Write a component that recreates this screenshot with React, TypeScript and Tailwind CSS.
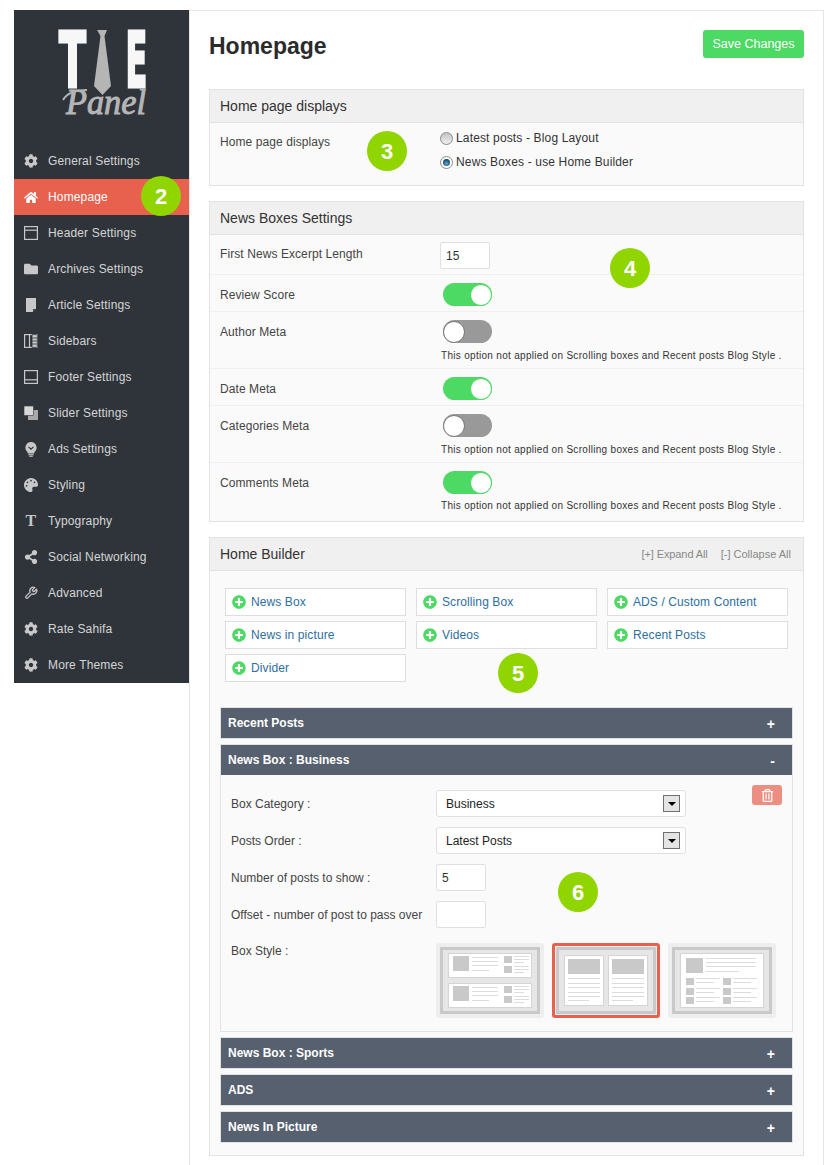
import React from "react";
import { FaCog, FaHome, FaFolder, FaPalette, FaShareAlt, FaPlusCircle, FaRegTrashAlt } from "react-icons/fa";
import { LuWrench } from "react-icons/lu";

const IconHeader = () => (
  <svg width="14" height="14" viewBox="0 0 14 14" fill="none" stroke="currentColor" strokeWidth="1.2"><rect x=".6" y=".6" width="12.8" height="12.8" /><path d="M.6 4.2h12.8" /></svg>
);
const IconFooter = () => (
  <svg width="14" height="14" viewBox="0 0 14 14" fill="none" stroke="currentColor" strokeWidth="1.2"><rect x=".6" y=".6" width="12.8" height="12.8" /><path d="M.6 9.8h12.8" /></svg>
);
const IconArticle = () => (
  <svg width="14" height="14" viewBox="0 0 14 14" fill="currentColor"><path d="M2 0h10v10.5L8.5 14H2z" /><path d="M9 11h2.2L9 13.2z" fill="#2f343b" /></svg>
);
const IconSidebars = () => (
  <svg width="14" height="14" viewBox="0 0 14 14" fill="none" stroke="currentColor" strokeWidth="1.2"><rect x=".6" y=".6" width="12.8" height="12.8" /><path d="M5.5 .6v12.8" /><path d="M8 .6h5.4v12.8H8zM8 4h5.4M8 7h5.4M8 10h5.4" fill="currentColor" strokeWidth=".8" stroke="#2f343b" /></svg>
);
const IconSlider = () => (
  <svg width="14" height="14" viewBox="0 0 14 14"><rect x="4" y="4" width="10" height="10" fill="#a9a9a9" /><rect x="0" y="0" width="9.5" height="9.5" fill="#d8d8d8" stroke="#2f343b" strokeWidth=".6" /></svg>
);
const IconBulb = () => (
  <svg width="14" height="15" viewBox="0 0 14 15"><path d="M7 0a5.6 5.6 0 0 1 3.4 10v1.5H3.6V10A5.6 5.6 0 0 1 7 0z" fill="currentColor" /><path d="M4.5 4.8 7 7.2l2.5-2.4" fill="none" stroke="#2f343b" strokeWidth="1.1" /><rect x="4.4" y="12.2" width="5.2" height="1.1" fill="currentColor" /><rect x="5.2" y="13.7" width="3.6" height="1.1" fill="currentColor" /></svg>
);

const navItems: [string, React.ReactNode][] = [
  ["General Settings", <FaCog size={14} />],
  ["Homepage", <FaHome size={15} />],
  ["Header Settings", <IconHeader />],
  ["Archives Settings", <FaFolder size={14} />],
  ["Article Settings", <IconArticle />],
  ["Sidebars", <IconSidebars />],
  ["Footer Settings", <IconFooter />],
  ["Slider Settings", <IconSlider />],
  ["Ads Settings", <IconBulb />],
  ["Styling", <FaPalette size={14} />],
  ["Typography", <span className="font-['Liberation_Serif'] font-bold text-[16px] leading-none">T</span>],
  ["Social Networking", <FaShareAlt size={14} />],
  ["Advanced", <LuWrench size={14} strokeWidth={2.2} />],
  ["Rate Sahifa", <FaCog size={14} />],
  ["More Themes", <FaCog size={14} />],
];

const Badge = ({ n, className }: { n: number; className: string }) => (
  <div className={`absolute w-10 h-10 rounded-full bg-[#90d400] text-white font-bold text-[22px] flex items-center justify-center font-['Liberation_Sans',sans-serif] ${className}`}>{n}</div>
);

const Logo = () => (
  <svg width="175" height="115" viewBox="14 10 175 115" className="block">
    <text x="59" y="86.5" fontFamily="'DejaVu Sans',sans-serif" fontWeight="700" fontSize="76" fill="#f7f7f7" stroke="#f7f7f7" strokeWidth="3" textLength="27" lengthAdjust="spacingAndGlyphs">T</text>
    <text x="125.6" y="86.5" fontFamily="'DejaVu Sans',sans-serif" fontWeight="700" fontSize="76" fill="#f7f7f7" stroke="#f7f7f7" strokeWidth="3" textLength="21.8" lengthAdjust="spacingAndGlyphs">E</text>
    <path d="M97 30h10l-2.5 6 6.5 50-8.5 9-8.5-9 6.5-50z" fill="#b5b5b5" />
    <path d="M63 100c4-7 14-10 24-10" fill="none" stroke="#b5b5b5" strokeWidth="2" />
    <text x="66" y="114" fontFamily="'Liberation Serif',serif" fontStyle="italic" fontSize="36" fill="#b5b5b5" stroke="#b5b5b5" strokeWidth="1" textLength="80" lengthAdjust="spacingAndGlyphs">Panel</text>
  </svg>
);

const Sidebar = () => (
  <aside className="w-[175px] h-[673px] shrink-0 bg-[#2f343b] relative">
    <Logo />
    <nav className="mt-[18px]">
      {navItems.map(([label, icon]) => {
        const active = label === "Homepage";
        return (
          <div key={label} className={`h-9 flex items-center pl-[10px] text-[12px] tracking-[0.15px] ${active ? "bg-[#e8614e] text-white" : "text-[#d4d4d4]"}`}>
            <span className={`w-[14px] h-[14px] flex items-center justify-center shrink-0 ${active ? "text-white" : "text-[#c8c8c8]"}`}>{icon}</span>
            <span className="ml-[10px]">{label}</span>
          </div>
        );
      })}
    </nav>
  </aside>
);

const Section = ({ title, right, children }: { title: string; right?: React.ReactNode; children: React.ReactNode }) => (
  <section className="border border-[#e2e2e2] bg-[#fafafa] mb-[15px]">
    <div className="h-[33px] bg-[#f0f0f0] border-b border-[#e2e2e2] flex items-center justify-between pl-[10px] pr-[12px] text-[14px] text-[#333]">
      <span>{title}</span>
      {right}
    </div>
    {children}
  </section>
);

const Radio = ({ checked, label }: { checked?: boolean; label: string }) => (
  <div className="flex items-center h-[24px]">
    <span className={`w-[13px] h-[13px] rounded-full border border-[#8a8a8a] flex items-center justify-center ${checked ? "bg-white" : "bg-gradient-to-b from-[#c4c4c4] to-[#f0f0f0]"}`}>
      {checked && <span className="w-[7px] h-[7px] rounded-full bg-[radial-gradient(circle_at_50%_65%,#58a8dc,#123f5e_75%)]" />}
    </span>
    <span className="ml-[3px] text-[12px] tracking-[0.15px] text-[#333]">{label}</span>
  </div>
);

const Toggle = ({ on }: { on?: boolean }) => (
  <div className={`w-[49px] h-[23px] rounded-full flex items-center ml-[3px] ${on ? "bg-[#4cd964] justify-end" : "bg-[#999999] justify-start"}`}>
    <span className={`w-[22px] h-[22px] rounded-full bg-white border ${on ? "border-[#4cd964]" : "border-[#777]"}`} />
  </div>
);

const Hint = ({ tight }: { tight?: boolean }) => (
  <p className={`${tight ? "mt-[5px]" : "mt-[6px]"} ml-[1px] text-[10px] leading-[14px] text-[#333] tracking-[0.3px] whitespace-nowrap`}>This option not applied on Scrolling boxes and Recent posts Blog Style .</p>
);

const SettingRow = ({ label, h, top, pad = "pt-[8px]", children, last }: { label: string; h: string; top: string; pad?: string; children: React.ReactNode; last?: boolean }) => (
  <div className={`flex pl-[10px] ${h} ${last ? "" : "border-b border-[#f0f0f0]"}`}>
    <div className={`w-[220px] text-[12px] tracking-[0.08px] text-[#444] shrink-0 ${top}`}>{label}</div>
    <div className={pad}>{children}</div>
  </div>
);

const Input = ({ value }: { value?: string }) => (
  <div className="w-[50px] h-[27px] bg-white border border-[#e0e0e0] rounded-[2px] flex items-center pl-[5px] text-[12px] text-[#333]">{value}</div>
);

const Select = ({ value }: { value: string }) => (
  <div className="w-[250px] h-[27px] bg-white border border-[#e0e0e0] rounded-[3px] flex items-center justify-between pl-[9px] pr-[5px] text-[12px] text-[#222]">
    <span>{value}</span>
    <span className="w-[17px] h-[17px] border border-[#707070] bg-[#e4e4e4] flex items-center justify-center">
      <span className="w-0 h-0 border-l-[4px] border-r-[4px] border-t-[4px] border-l-transparent border-r-transparent border-t-black" />
    </span>
  </div>
);

const AddButton = ({ label }: { label: string }) => (
  <div className="h-[28px] border border-[#dedede] bg-white flex items-center pl-[6px] text-[12px] tracking-[0.1px] text-[#2d6f9e]">
    <FaPlusCircle size={14} className="text-[#4cd964] shrink-0" />
    <span className="ml-[5px]">{label}</span>
  </div>
);

const AccHeader = ({ title, sign = "+" }: { title: string; sign?: string }) => (
  <div className="h-[30px] bg-[#56606e] flex items-center justify-between pl-[7px] pr-[17px] text-white font-bold text-[12px]">
    <span className="pb-[1px]">{title}</span>
    <span className="text-[14px] pt-[3px]">{sign}</span>
  </div>
);

const Acc = ({ title }: { title: string }) => (
  <div className="border border-[#e2e2e2] mb-[5px]"><AccHeader title={title} /></div>
);

const Line = ({ x, y, w }: { x: number; y: number; w: number }) => <rect x={x} y={y} width={w} height="1" fill="#dcdcdc" />;
const Sq = ({ x, y, w, h }: { x: number; y: number; w: number; h: number }) => <rect x={x} y={y} width={w} height={h} fill="#c9c9c9" />;

const Frame = ({ children }: { children: React.ReactNode }) => (
  <>
    <rect x="5.5" y="5.5" width="97" height="64" fill="#e6e6e6" stroke="#c9c9c9" strokeWidth="3" />
    {children}
  </>
);

const Wide = ({ y }: { y: number }) => (
  <g>
    <rect x="12.5" y={y + 0.5} width="83" height="24" fill="#fff" stroke="#d5d5d5" />
    <Sq x={17} y={y + 3} w={16} h={15} />
    <Line x={36} y={y + 4} w={26} /><Line x={36} y={y + 8} w={26} /><Line x={36} y={y + 12} w={26} /><Line x={36} y={y + 17} w={17} />
    <Sq x={68} y={y + 3} w={8} h={7} /><Sq x={68} y={y + 13} w={8} h={7} />
    <Line x={78} y={y + 3} w={15} /><Line x={78} y={y + 6} w={15} /><Line x={78} y={y + 9} w={10} />
    <Line x={78} y={y + 13} w={15} /><Line x={78} y={y + 16} w={15} /><Line x={78} y={y + 19} w={10} />
  </g>
);

const Tall = ({ x }: { x: number }) => (
  <g>
    <rect x={x + 0.5} y="12.5" width="39" height="50" fill="#fff" stroke="#d5d5d5" />
    <Sq x={x + 4} y={16} w={32} h={15} />
    <Line x={x + 4} y={35} w={32} /><Line x={x + 4} y={40} w={32} /><Line x={x + 4} y={44} w={32} /><Line x={x + 4} y={49} w={32} /><Line x={x + 4} y={53} w={32} /><Line x={x + 4} y={57} w={21} />
  </g>
);

const Mini = ({ x, y }: { x: number; y: number }) => (
  <g>
    <Sq x={x} y={y} w={8} h={7} />
    <Line x={x + 10} y={y} w={24} /><Line x={x + 10} y={y + 4} w={18} />
  </g>
);

const Thumb = ({ selected, children }: { selected?: boolean; children: React.ReactNode }) => (
  <div className="w-[108px] h-[75px] bg-[#eeeeee] rounded-[3px] relative">
    <svg width="108" height="75" viewBox="0 0 108 75" className="block"><Frame>{children}</Frame></svg>
    {selected && <div className="absolute inset-0 rounded-[3px] border-[3px] border-[#e8614e]" />}
  </div>
);

const BoxForm = () => (
  <div className="relative bg-[#fafafa] pl-[10px] pt-[15px] pb-[13px] text-[12px] text-[#444]">
    <div className="absolute right-[10px] top-[10px] w-[30px] h-[20px] bg-[#ec8f82] rounded-[3px] flex items-center justify-center text-white">
      <FaRegTrashAlt size={13} />
    </div>
    <div className="flex flex-col gap-[10px]">
      <div className="flex"><div className="w-[205px] pt-[5px]">Box Category :</div><Select value="Business" /></div>
      <div className="flex"><div className="w-[205px] pt-[5px]">Posts Order :</div><Select value="Latest Posts" /></div>
      <div className="flex"><div className="w-[205px] pt-[5px]">Number of posts to show :</div><Input value="5" /></div>
      <div className="flex"><div className="w-[205px] pt-[5px]">Offset - number of post to pass over</div><Input /></div>
    </div>
    <div className="flex mt-[15px]">
      <div className="w-[205px] -mt-[1px]">Box Style :</div>
      <div className="flex gap-[8px]">
        <Thumb><Wide y={10} /><Wide y={40} /></Thumb>
        <Thumb selected><Tall x={12} /><Tall x={56} /></Thumb>
        <Thumb>
          <rect x="12.5" y="10.5" width="83" height="54" fill="#fff" stroke="#d5d5d5" />
          <Sq x={18} y={15} w={17} h={15} />
          <Line x={38} y={15} w={50} /><Line x={38} y={19} w={50} /><Line x={38} y={23} w={50} /><Line x={38} y={28} w={33} />
          <Mini x={18} y={35} /><Mini x={18} y={45} /><Mini x={18} y={54} />
          <Mini x={55} y={35} /><Mini x={55} y={45} /><Mini x={55} y={54} />
        </Thumb>
      </div>
    </div>
  </div>
);

export default function App() {
  return (
    <div className="relative w-[833px] h-[1165px] overflow-hidden bg-white flex pt-[10px] pl-[14px] font-['Liberation_Sans',Arial,sans-serif]">
      <Sidebar />
      <main className="w-[635px] h-[1155px] shrink-0 border-l border-r border-t border-[#e5e5e5] px-[19px] pt-[19px]">
        <div className="flex justify-between items-start h-[59px]">
          <h1 className="text-[23px] font-bold text-[#2b2b2b] leading-[32px]">Homepage</h1>
          <div className="w-[101px] h-[28px] bg-[#4cd964] rounded-[3px] text-white text-[12.5px] flex items-center justify-center">Save Changes</div>
        </div>
        <Section title="Home page displays">
          <div className="flex pl-[10px] h-[62px]">
            <div className="w-[220px] text-[12px] tracking-[0.08px] text-[#444] pt-[10px]">Home page displays</div>
            <div className="pt-[3px]">
              <Radio label="Latest posts - Blog Layout" />
              <Radio checked label="News Boxes - use Home Builder" />
            </div>
          </div>
        </Section>
        <Section title="News Boxes Settings">
          <SettingRow label="First News Excerpt Length" h="h-[40px]" top="pt-[10px]" pad="pt-[7px]"><Input value="15" /></SettingRow>
          <SettingRow label="Review Score" h="h-[37px]" top="pt-[11px]"><Toggle on /></SettingRow>
          <SettingRow label="Author Meta" h="h-[57px]" top="pt-[11px]"><Toggle /><Hint /></SettingRow>
          <SettingRow label="Date Meta" h="h-[37px]" top="pt-[11px]"><Toggle on /></SettingRow>
          <SettingRow label="Categories Meta" h="h-[57px]" top="pt-[11px]"><Toggle /><Hint /></SettingRow>
          <SettingRow label="Comments Meta" h="h-[58px]" top="pt-[11px]" last><Toggle on /><Hint tight /></SettingRow>
        </Section>
        <Section
          title="Home Builder"
          right={
            <span className="text-[11px] text-[#888] flex gap-[13px]">
              <span className="tracking-[-0.1px]">[+] Expand All</span>
              <span>[-] Collapse All</span>
            </span>
          }
        >
          <div className="px-[10px] pt-[17px] pb-[7px]">
            <div className="grid grid-cols-3 gap-x-[10px] gap-y-[5px] px-[5px] mb-[25px]">
              <AddButton label="News Box" />
              <AddButton label="Scrolling Box" />
              <AddButton label="ADS / Custom Content" />
              <AddButton label="News in picture" />
              <AddButton label="Videos" />
              <AddButton label="Recent Posts" />
              <AddButton label="Divider" />
            </div>
            <Acc title="Recent Posts" />
            <div className="border border-[#e2e2e2] mb-[5px]">
              <AccHeader title="News Box : Business" sign="-" />
              <BoxForm />
            </div>
            <Acc title="News Box : Sports" />
            <Acc title="ADS" />
            <Acc title="News In Picture" />
          </div>
        </Section>
      </main>
      <Badge n={2} className="left-[141px] top-[176px]" />
      <Badge n={3} className="left-[367px] top-[131px]" />
      <Badge n={4} className="left-[610px] top-[248px]" />
      <Badge n={5} className="left-[498px] top-[653px]" />
      <Badge n={6} className="left-[558px] top-[872px]" />
    </div>
  );
}
